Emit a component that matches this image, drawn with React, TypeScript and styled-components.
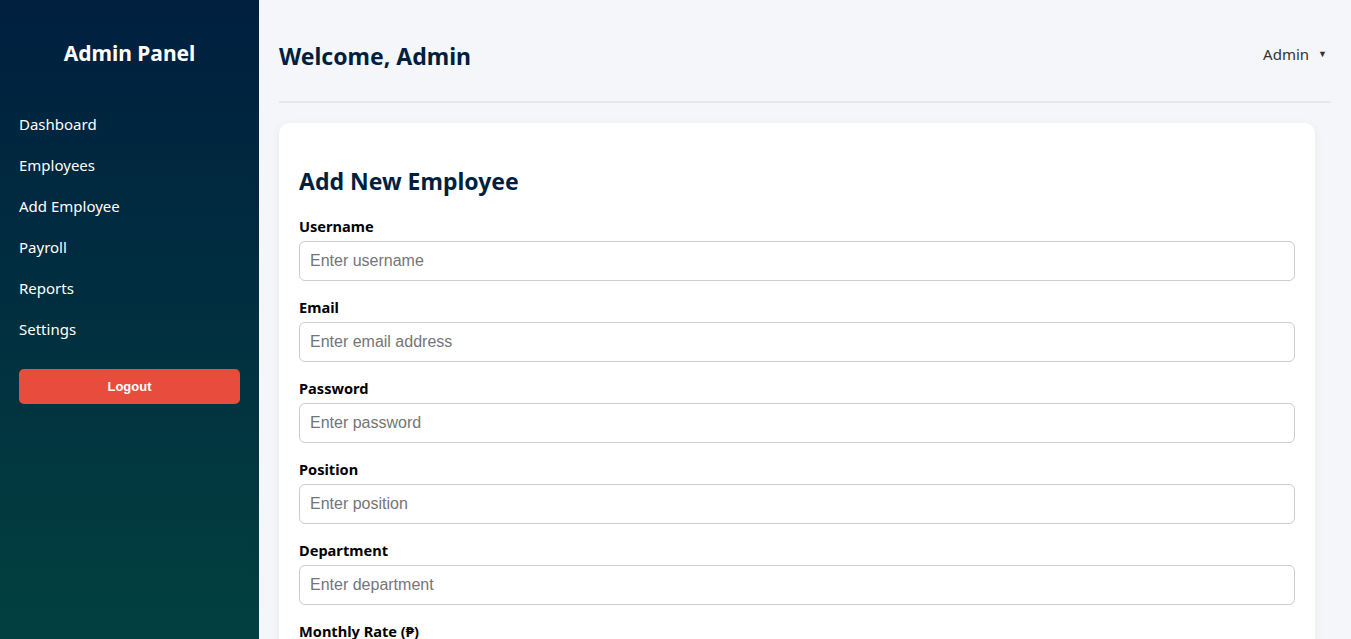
import React from "react";
import styled, { createGlobalStyle } from "styled-components";

const GlobalStyle = createGlobalStyle`
  * { box-sizing: border-box; }
  html, body { margin: 0; padding: 0; }
  body {
    font-family: "Segoe UI", "Noto Sans", "Open Sans", sans-serif;
    background: #f4f6f9;
  }
  ::-webkit-scrollbar { display: none; }
`;

const Layout = styled.div`
  display: flex;
  height: 100vh;
  overflow: hidden;
`;

const Sidebar = styled.aside`
  flex: 0 0 259px;
  height: 100vh;
  padding: 20px 19px;
  background: linear-gradient(180deg, #001f3f 0%, #024040 100%);
  color: #fff;
  display: flex;
  flex-direction: column;
`;

const Brand = styled.h2`
  margin: 18px 0 44px;
  text-align: center;
  font-size: 21px;
  font-weight: 700;
  line-height: 30px;
`;

const Nav = styled.nav`
  display: flex;
  flex-direction: column;
  gap: 17px;
`;

const NavLink = styled.a`
  color: #fff;
  text-decoration: none;
  font-size: 15px;
  line-height: 24px;
  cursor: pointer;
`;

const LogoutButton = styled.button`
  margin-top: 28px;
  height: 35px;
  width: 100%;
  border: none;
  border-radius: 5px;
  background: #e74c3c;
  color: #fff;
  font-family: "Liberation Sans", Arial, sans-serif;
  font-weight: 700;
  font-size: 13px;
  cursor: pointer;
`;

const Main = styled.main`
  flex: 1;
  height: 100vh;
  overflow-y: auto;
  padding: 20px 20px 40px;
`;

const Header = styled.header`
  display: flex;
  justify-content: space-between;
  align-items: center;
  height: 83px;
  padding-bottom: 10px;
  border-bottom: 2px solid #e6e8eb;
`;

const Welcome = styled.h1`
  margin: 0;
  font-size: 23px;
  font-weight: 700;
  color: #001f3f;
`;

const UserMenu = styled.div`
  display: flex;
  align-items: center;
  gap: 9px;
  margin-top: -4px;
  margin-right: 4px;
  font-size: 15px;
  color: #333;
  cursor: pointer;
`;

const Caret = styled.span`
  font-size: 9px;
  line-height: 1;
`;

const Card = styled.section`
  margin: 20px 16px 0 0;
  padding: 20px 20px 30px;
  background: #fff;
  border-radius: 10px;
  box-shadow: 0 2px 10px rgba(0, 0, 0, 0.06);
`;

const CardTitle = styled.h2`
  margin: 22px 0 20px;
  font-size: 23px;
  font-weight: 700;
  color: #001f3f;
`;

const Field = styled.div`
  display: flex;
  flex-direction: column;
  margin-bottom: 17px;
`;

const Label = styled.label`
  margin-bottom: 6px;
  font-size: 14.6px;
  font-weight: 700;
  color: #000;
  line-height: 18px;
`;

const Input = styled.input`
  height: 40px;
  width: 100%;
  padding: 0 10px;
  border: 1px solid #ccc;
  border-radius: 6px;
  font-family: "Liberation Sans", Arial, sans-serif;
  font-size: 16px;
  color: #333;
  &::placeholder { color: #757575; }
`;

const SubmitButton = styled.button`
  margin-top: 6px;
  padding: 11px 22px;
  border: none;
  border-radius: 6px;
  background: #001f3f;
  color: #fff;
  font-size: 15px;
  font-weight: 700;
`;

const navItems = ["Dashboard", "Employees", "Add Employee", "Payroll", "Reports", "Settings"];

const fields = [
  { label: "Username", placeholder: "Enter username", type: "text" },
  { label: "Email", placeholder: "Enter email address", type: "email" },
  { label: "Password", placeholder: "Enter password", type: "password" },
  { label: "Position", placeholder: "Enter position", type: "text" },
  { label: "Department", placeholder: "Enter department", type: "text" },
  { label: "Monthly Rate (₱)", placeholder: "Enter monthly rate", type: "number" },
];

export default function App() {
  return (
    <>
      <GlobalStyle />
      <Layout>
        <Sidebar>
          <Brand>Admin Panel</Brand>
          <Nav>
            {navItems.map((item) => (
              <NavLink key={item}>{item}</NavLink>
            ))}
          </Nav>
          <LogoutButton>Logout</LogoutButton>
        </Sidebar>
        <Main>
          <Header>
            <Welcome>Welcome, Admin</Welcome>
            <UserMenu>
              Admin <Caret>▼</Caret>
            </UserMenu>
          </Header>
          <Card>
            <CardTitle>Add New Employee</CardTitle>
            <form onSubmit={(e) => e.preventDefault()}>
              {fields.map((f) => (
                <Field key={f.label}>
                  <Label>{f.label}</Label>
                  <Input type={f.type} placeholder={f.placeholder} />
                </Field>
              ))}
              <SubmitButton type="submit">Add Employee</SubmitButton>
            </form>
          </Card>
        </Main>
      </Layout>
    </>
  );
}
